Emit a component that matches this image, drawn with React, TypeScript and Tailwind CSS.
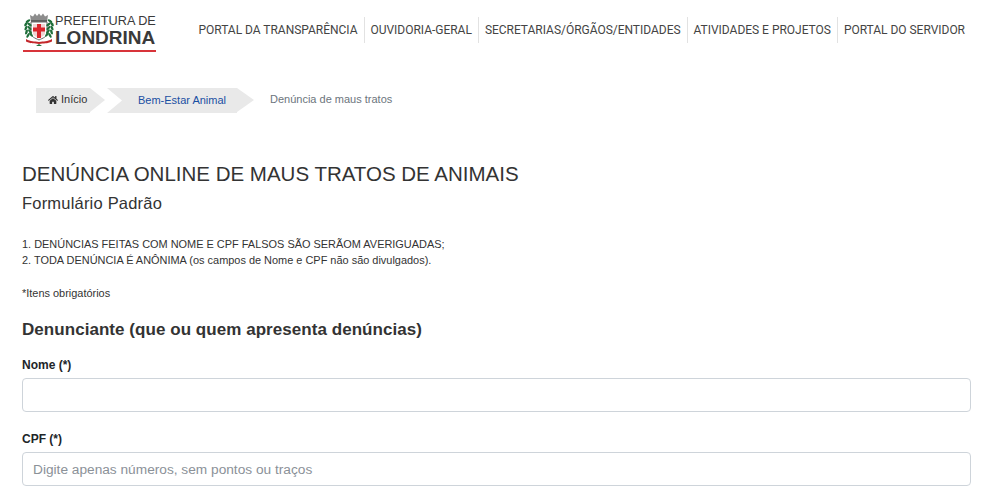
import { useState } from "react";
import { FaHome } from "react-icons/fa";

const navLinks = [
  "PORTAL DA TRANSPARÊNCIA",
  "OUVIDORIA-GERAL",
  "SECRETARIAS/ÓRGÃOS/ENTIDADES",
  "ATIVIDADES E PROJETOS",
  "PORTAL DO SERVIDOR",
];

const leaves = [
  [5, 8, -30],
  [3, 11, -55],
  [6.5, 11.5, 35],
  [3, 15, -65],
  [6.5, 15, 45],
  [3.5, 19, -70],
  [7, 18.5, 50],
  [5, 22.5, -60],
  [8, 21.5, 50],
];

function Crest() {
  return (
    <svg width="32" height="34" viewBox="0 0 32 34" className="shrink-0">
      {/* crown */}
      <path d="M8 9 L7 2 L10 3.5 L12 0.5 L14 3 L16 0.5 L18 3 L20 0.5 L22 3.5 L25 2 L24 9 Z" fill="#8c8c8c" />
      <rect x="8" y="7" width="16" height="2" fill="#5f5f5f" />
      {/* shield */}
      <path d="M8 9 H24 V20 C24 24 20 25 16 27 C12 25 8 24 8 20 Z" fill="#fff" stroke="#6a6a6a" strokeWidth="1" />
      <path d="M10 11 H22 V20 C22 22.500 19 23.500 16 25 C13 23.500 10 22.500 10 20 Z" fill="#f1d3d3" />
      <path d="M14 11 H18 V14.500 H22 V18.500 H18 V25 H14 V18.500 H10 V14.500 H14 Z" fill="#d9252c" />
      {/* laurels */}
      {leaves.map(([x, y, r], i) => (
        <ellipse key={i} cx={x} cy={y} rx="2.600" ry="1.200" fill="#1f6e3a" transform={`rotate(${r} ${x} ${y})`} />
      ))}
      {leaves.map(([x, y, r], i) => (
        <ellipse key={i} cx={32 - x} cy={y} rx="2.600" ry="1.200" fill="#1f6e3a" transform={`rotate(${-r} ${32 - x} ${y})`} />
      ))}
      {/* ribbon */}
      <path d="M3 26 C8 29 11 28 16 29 C21 28 24 29 29 26 L29 28.500 C24 31 21 30 16 31 C11 30 8 31 3 28.500 Z" fill="#c3272b" />
      <path d="M13 33 L16 31 L19 33 Z" fill="#1f6e3a" />
    </svg>
  );
}

function Field({ label, placeholder }: { label: string; placeholder?: string }) {
  const [value, setValue] = useState("");
  return (
    <div className="flex flex-col">
      <label className="text-[12px] leading-[17px] font-bold text-[#212529] mb-[4px]">{label}</label>
      <input
        value={value}
        onChange={(e) => setValue(e.target.value)}
        placeholder={placeholder}
        className="h-[34px] w-full rounded-[4px] border border-[#ced4da] bg-white px-[10px] text-[13.7px] text-[#495057] placeholder:text-[#8b9198] outline-none"
      />
    </div>
  );
}

export default function App() {
  return (
    <div className="h-[498px] overflow-hidden bg-white font-['Liberation_Sans',Arial,sans-serif] text-[#212529]">
      <header className="flex items-start justify-between pl-[23px] pr-[29px] pt-[13px] h-[74px]">
        <div className="flex flex-col w-[133px]">
          <div className="flex items-center h-[34px]">
            <Crest />
            <div className="flex flex-col text-[#3a3a3a] pt-[2px]">
              <span className="text-[12.7px] leading-[13px] whitespace-nowrap">PREFEITURA DE</span>
              <span className="text-[19px] leading-[19px] font-bold whitespace-nowrap">LONDRINA</span>
            </div>
          </div>
          <div className="h-[2px] bg-[#d8343a] mt-[3px]" />
        </div>
        <nav className="flex items-center pt-[4px] font-['Roboto',Arial,sans-serif]">
          {navLinks.map((link, i) => (
            <a
              key={link}
              className={`h-[26px] flex items-center px-[6px] text-[12px] tracking-[-0.02px] text-[#444] whitespace-nowrap ${i > 0 ? "border-l border-[#e2e2e2]" : ""}`}
            >
              {link}
            </a>
          ))}
        </nav>
      </header>

      <main className="px-[22px]">
        <ol className="flex items-center ml-[14px] mt-[14px] h-[25px] text-[11px] leading-[23px]">
          <li className="relative flex items-center h-[25px] w-[54px] bg-[#e9e9e9] pl-[12px] pb-[2px] text-[#333] gap-[3px]">
            <FaHome className="text-[10px]" />
            <span>Início</span>
            <span className="absolute left-full top-0 border-y-[12.5px] border-l-[15px] border-y-transparent border-l-[#e9e9e9]" />
          </li>
          <li className="flex items-center h-[25px] ml-[17px] w-[130px] bg-[#e9e9e9] pl-[31px] pb-[1px] text-[#1a4fa3] [clip-path:polygon(0_0,100%_0,100%_100%,0_100%,15px_50%)]">
            Bem-Estar Animal
          </li>
          <li className="relative h-[25px] w-0">
            <span className="absolute left-0 top-0 border-y-[12.5px] border-l-[17px] border-y-transparent border-l-[#e9e9e9]" />
          </li>
          <li className="ml-[33px] pb-[2px] text-[#6c757d]">Denúncia de maus tratos</li>
        </ol>

        <h1 className="mt-[49px] text-[20.5px] leading-[24px] text-[#333]">DENÚNCIA ONLINE DE MAUS TRATOS DE ANIMAIS</h1>
        <h2 className="mt-[5px] text-[16.5px] leading-[24px] text-[#333] tracking-[0.2px]">Formulário Padrão</h2>

        <div className="mt-[21px] text-[10.95px] leading-[16px] text-[#333]">
          <p>1. DENÚNCIAS FEITAS COM NOME E CPF FALSOS SÃO SERÃOM AVERIGUADAS;</p>
          <p>2. TODA DENÚNCIA É ANÔNIMA (os campos de Nome e CPF não são divulgados).</p>
        </div>
        <p className="mt-[17px] text-[10.95px] leading-[16px] text-[#333]">*Itens obrigatórios</p>

        <h3 className="mt-[19px] text-[17px] leading-[20px] font-bold text-[#333] tracking-[0.05px]">
          Denunciante (que ou quem apresenta denúncias)
        </h3>

        <div className="mt-[17px] flex flex-col gap-[19px] w-[949px]">
          <Field label="Nome (*)" />
          <Field label="CPF (*)" placeholder="Digite apenas números, sem pontos ou traços" />
        </div>
      </main>
    </div>
  );
}
